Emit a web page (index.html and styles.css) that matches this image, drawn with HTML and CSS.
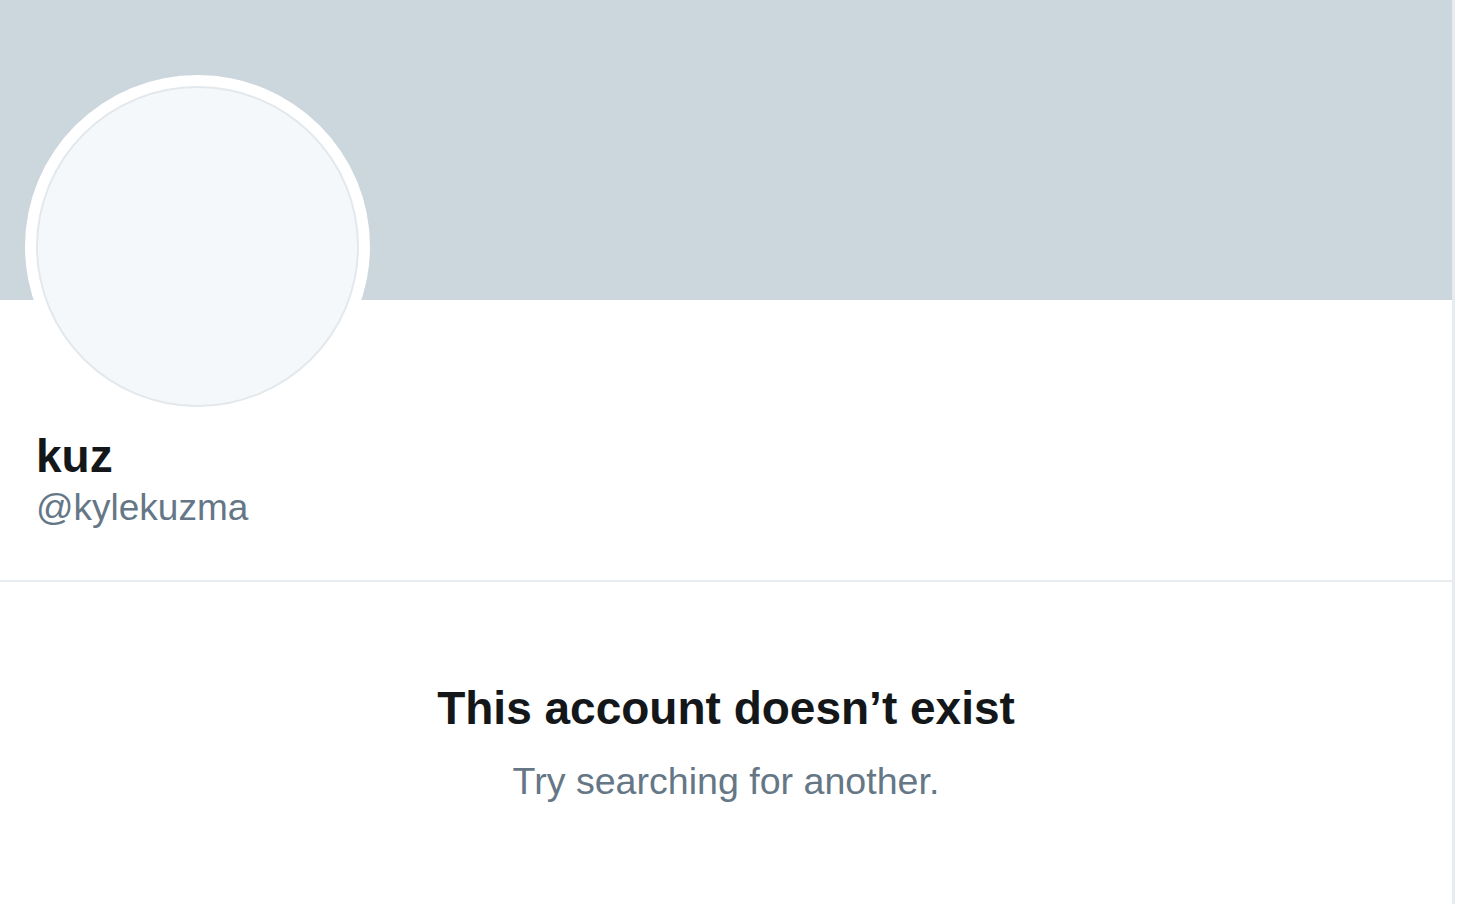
FILE: index.html
```html
<!DOCTYPE html>
<html lang="en">
<head>
<meta charset="utf-8">
<title>kuz (@kylekuzma)</title>
<link rel="stylesheet" href="styles.css">
</head>
<body>
<main class="column">
  <div class="banner"></div>
  <section class="profile">
    <div class="avatar"><div class="avatar-inner"></div></div>
    <div class="name">kuz</div>
    <div class="handle">@kylekuzma</div>
  </section>
  <section class="empty">
    <h1 class="empty-title">This account doesn’t exist</h1>
    <p class="empty-sub">Try searching for another.</p>
  </section>
</main>
</body>
</html>
```
FILE: styles.css
```css
html, body {
  margin: 0;
  padding: 0;
  background: #ffffff;
}
body {
  font-family: "Liberation Sans", Helvetica, Arial, sans-serif;
  color: #14171a;
  height: 904px;
  overflow: hidden;
}
.column {
  width: 1452px;
  height: 904px;
  border-right: 3px solid #e6ecf0;
  box-sizing: content-box;
}
.banner {
  height: 300px;
  background: #ccd6dd;
}
.profile {
  padding-left: 36px;
  padding-bottom: 50px;
  border-bottom: 2px solid #e6ecf0;
}
.avatar {
  width: 345px;
  height: 343px;
  margin-top: -225px;
  margin-left: -11px;
  box-sizing: border-box;
  border-radius: 50%;
  background: #ffffff;
  padding: 11px;
}
.avatar-inner {
  width: 100%;
  height: 100%;
  box-sizing: border-box;
  border-radius: 50%;
  background: #f5f8fa;
  border: 2px solid #e3e8ec;
}
.name {
  margin-top: 11px;
  font-size: 46px;
  line-height: 55px;
  font-weight: 700;
  color: #14171a;
}
.handle {
  margin-top: 2px;
  font-size: 37px;
  line-height: 44px;
  color: #657786;
}
.empty {
  padding-top: 99px;
  text-align: center;
}
.empty-title {
  margin: 0;
  font-size: 46px;
  line-height: 55px;
  font-weight: 700;
  color: #14171a;
}
.empty-sub {
  margin: 23px 0 0;
  font-size: 37.6px;
  line-height: 44px;
  color: #657786;
}
```
